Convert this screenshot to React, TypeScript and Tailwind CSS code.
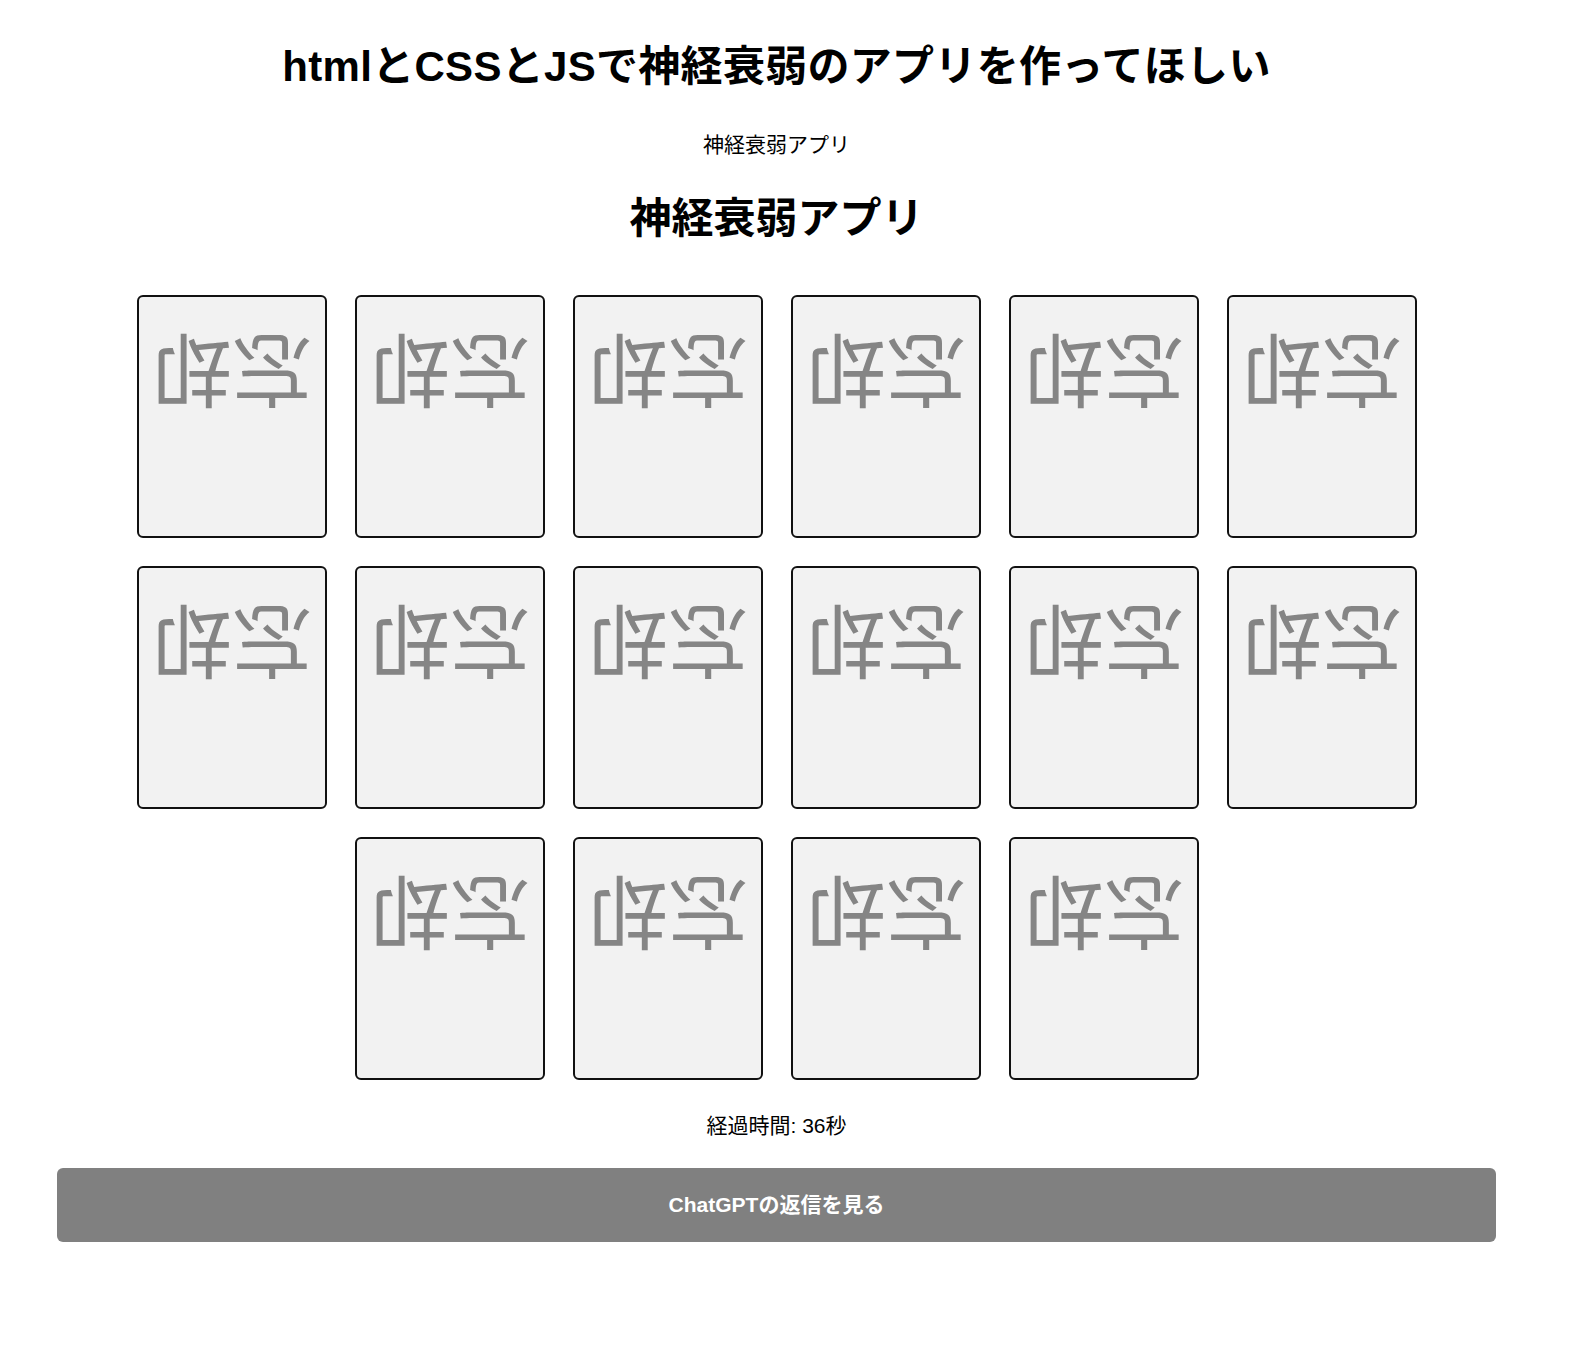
const CARD_COUNT = 16;

function Card() {
  return (
    <div className="box-border flex h-[243px] w-[190px] items-start justify-center rounded-[6px] border-2 border-[#111] bg-[#f2f2f2] pt-[31px]">
      <span className="block rotate-180 text-[80px] leading-none text-[#858585]">忘却</span>
    </div>
  );
}

export default function App() {
  return (
    <div className="min-h-screen bg-white pl-[57px] pt-[42px] text-black [font-family:'Liberation_Sans','Noto_Sans_CJK_JP',sans-serif]">
      <div className="flex w-[1439px] flex-col items-center">
        <h1 className="text-[42px] font-bold leading-[50px] tracking-[0.3px]">
          htmlとCSSとJSで神経衰弱のアプリを作ってほしい
        </h1>
        <p className="mt-[39px] text-[21px] leading-[28px]">神経衰弱アプリ</p>
        <h2 className="mt-[35px] text-[42px] font-bold leading-[50px]">神経衰弱アプリ</h2>

        <div className="mt-[51px] flex w-[1280px] flex-wrap justify-center gap-[28px]">
          {Array.from({ length: CARD_COUNT }).map((_, i) => (
            <Card key={i} />
          ))}
        </div>

        <p className="mt-[32px] text-[21px] leading-[28px]">経過時間: 36秒</p>

        <button
          type="button"
          className="mt-[28px] h-[74px] w-full rounded-[6px] bg-[#808080] text-[21px] font-bold text-white"
        >
          ChatGPTの返信を見る
        </button>
      </div>
    </div>
  );
}
